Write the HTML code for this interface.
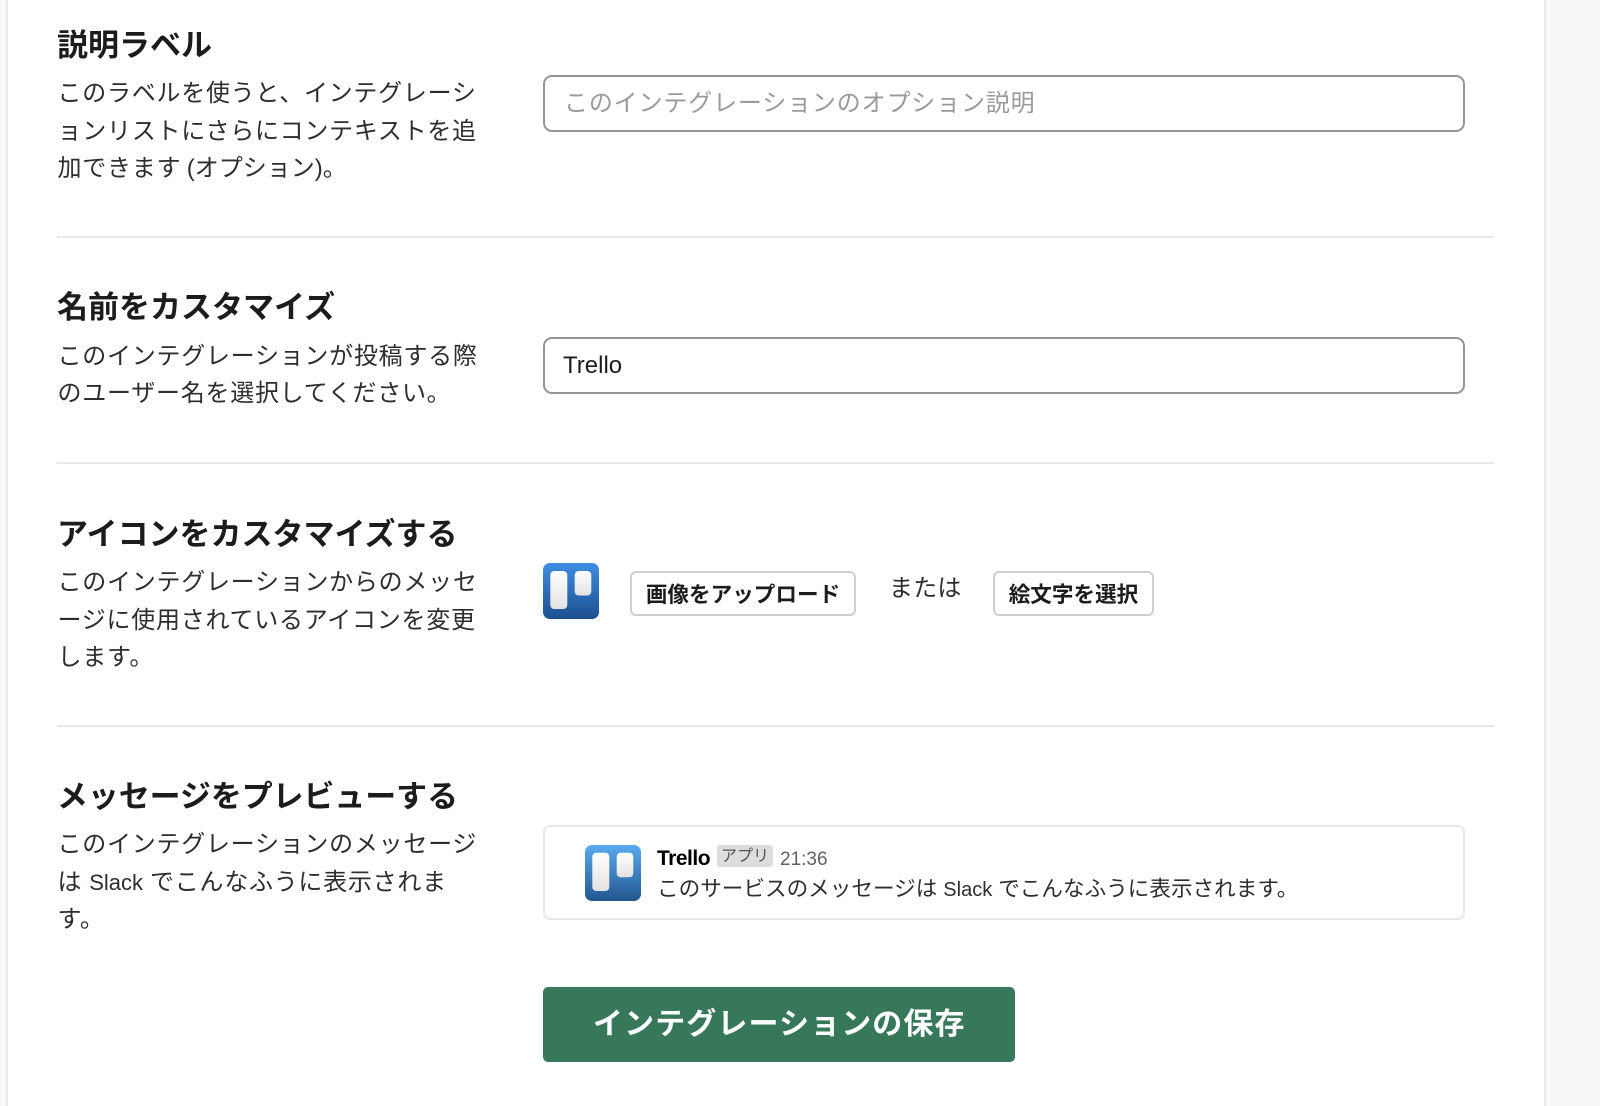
<!DOCTYPE html>
<html lang="ja"><head><meta charset="utf-8"><title>Trello</title>
<style>
html,body{margin:0;padding:0;width:1600px;height:1106px;overflow:hidden;background:#f7f7f7}
body{font-family:"Liberation Sans","Noto Sans CJK JP",sans-serif;color:#1d1c1d;position:relative}
.card{position:absolute;left:6px;top:-2px;width:1536px;height:1110px;background:#fff;border-left:2px solid #e8e8e8;border-right:2px solid #e8e8e8}
.t{position:absolute;white-space:nowrap}
.h{font-size:31px;font-weight:700;line-height:40px;left:57px;color:#1d1c1d}
.d{font-size:24px;letter-spacing:.74px;line-height:38px;left:57.5px;color:#2c2d30}
.hr{position:absolute;left:57px;width:1437px;height:2px;background:#e8e8e8}
.inp{position:absolute;left:543px;width:918px;height:53px;border:2px solid #949494;border-radius:9px;background:#fff}
.btn{position:absolute;top:571px;height:41px;border:2px solid #cfcfcf;border-radius:6px;background:#fff;font-size:21.6px;font-weight:700;line-height:43px;text-align:center;white-space:nowrap;color:#1d1c1d}
svg{position:absolute}
.sp{font-size:20px;letter-spacing:0}
.sq{letter-spacing:.3px}
</style></head><body>
<div class="card"></div>

<div class="t h" style="top:26px">説明ラベル</div>
<div class="t d" style="top:75px">このラベルを使うと、インテグレーシ</div>
<div class="t d" style="top:113px">ョンリストにさらにコンテキストを追</div>
<div class="t d" style="top:150px">加できます<span class="sp"> </span><span style="letter-spacing:0">(オプション)。</span></div>
<div class="inp" style="top:75px"></div>
<div class="t" style="left:564px;top:85px;font-size:24px;letter-spacing:.84px;line-height:38px;color:#9a9a9a">このインテグレーションのオプション説明</div>
<div class="hr" style="top:236px"></div>

<div class="t h" style="top:288px">名前をカスタマイズ</div>
<div class="t d" style="top:338px">このインテグレーションが投稿する際</div>
<div class="t d" style="top:375px">のユーザー名を選択してください。</div>
<div class="inp" style="top:337px"></div>
<div class="t" style="left:563px;top:347px;font-size:24px;line-height:38px;color:#1d1c1d">Trello</div>
<div class="hr" style="top:462px"></div>

<div class="t h" style="top:515px">アイコンをカスタマイズする</div>
<div class="t d" style="top:564px">このインテグレーションからのメッセ</div>
<div class="t d" style="top:602px">ージに使用されているアイコンを変更</div>
<div class="t d" style="top:639px">します。</div>
<svg style="left:543px;top:563px" width="56" height="56" viewBox="0 0 56 56"><defs><linearGradient id="a" x1="0" y1="0" x2="0" y2="1"><stop offset="0" stop-color="#3f8ee4"/><stop offset="1" stop-color="#1d4f8f"/></linearGradient><linearGradient id="w" x1="0" y1="0" x2="0" y2="1"><stop offset="0" stop-color="#fff"/><stop offset="1" stop-color="#e2e2e2"/></linearGradient></defs><rect width="56" height="56" rx="7" fill="url(#a)"/><rect x="7.3" y="8" width="17" height="38" rx="4" fill="url(#w)"/><rect x="31.7" y="8" width="16.6" height="24.5" rx="4" fill="url(#w)"/></svg>
<div class="btn" style="left:630px;width:222px">画像をアップロード</div>
<div class="t" style="left:889px;top:570px;font-size:24px;letter-spacing:.2px;line-height:38px;color:#2c2d30">または</div>
<div class="btn" style="left:993px;width:157px">絵文字を選択</div>
<div class="hr" style="top:725px"></div>

<div class="t h" style="top:777px;font-size:30.9px">メッセージをプレビューする</div>
<div class="t d" style="top:826px">このインテグレーションのメッセージ</div>
<div class="t d" style="top:864px">は<span class="sq"> </span><span style="font-size:22px;letter-spacing:0;line-height:0">Slack</span><span class="sq"> </span>でこんなふうに表示されま</div>
<div class="t d" style="top:901px">す。</div>
<div style="position:absolute;left:543px;top:825px;width:918px;height:91px;border:2px solid #e8e8e8;border-radius:7px;background:#fff"></div>
<svg style="left:585px;top:845px" width="56" height="56" viewBox="0 0 56 56"><defs><linearGradient id="b" x1="0" y1="0" x2="0" y2="1"><stop offset="0" stop-color="#5aaaf0"/><stop offset="1" stop-color="#23568f"/></linearGradient></defs><rect width="56" height="56" rx="7" fill="url(#b)"/><rect x="7.3" y="7.7" width="17" height="38.3" rx="4" fill="url(#w)"/><rect x="31.7" y="7.7" width="16.6" height="24.6" rx="4" fill="url(#w)"/></svg>
<div class="t" style="left:657px;top:844px;font-size:21px;font-weight:700;letter-spacing:-.5px;line-height:30px;color:#000">Trello</div>
<div class="t" style="left:717px;top:845px;width:56px;height:22px;background:#ddd;border-radius:3px;font-size:16px;line-height:24px;text-align:center;color:#555">アプリ</div>
<div class="t" style="left:780px;top:845px;font-size:19px;line-height:30px;color:#616061">21:36</div>
<div class="t" style="left:657px;top:873px;font-size:21.6px;line-height:32px;color:#2c2d30">このサービスのメッセージは <span style="font-size:20px">Slack</span> でこんなふうに表示されます。</div>

<div style="position:absolute;left:543px;top:987px;width:472px;height:75px;background:#37785b;border-radius:5px"></div>
<div class="t" style="left:593px;top:1004px;font-size:30px;font-weight:700;letter-spacing:1.1px;line-height:42px;color:#fff">インテグレーションの保存</div>
</body></html>
